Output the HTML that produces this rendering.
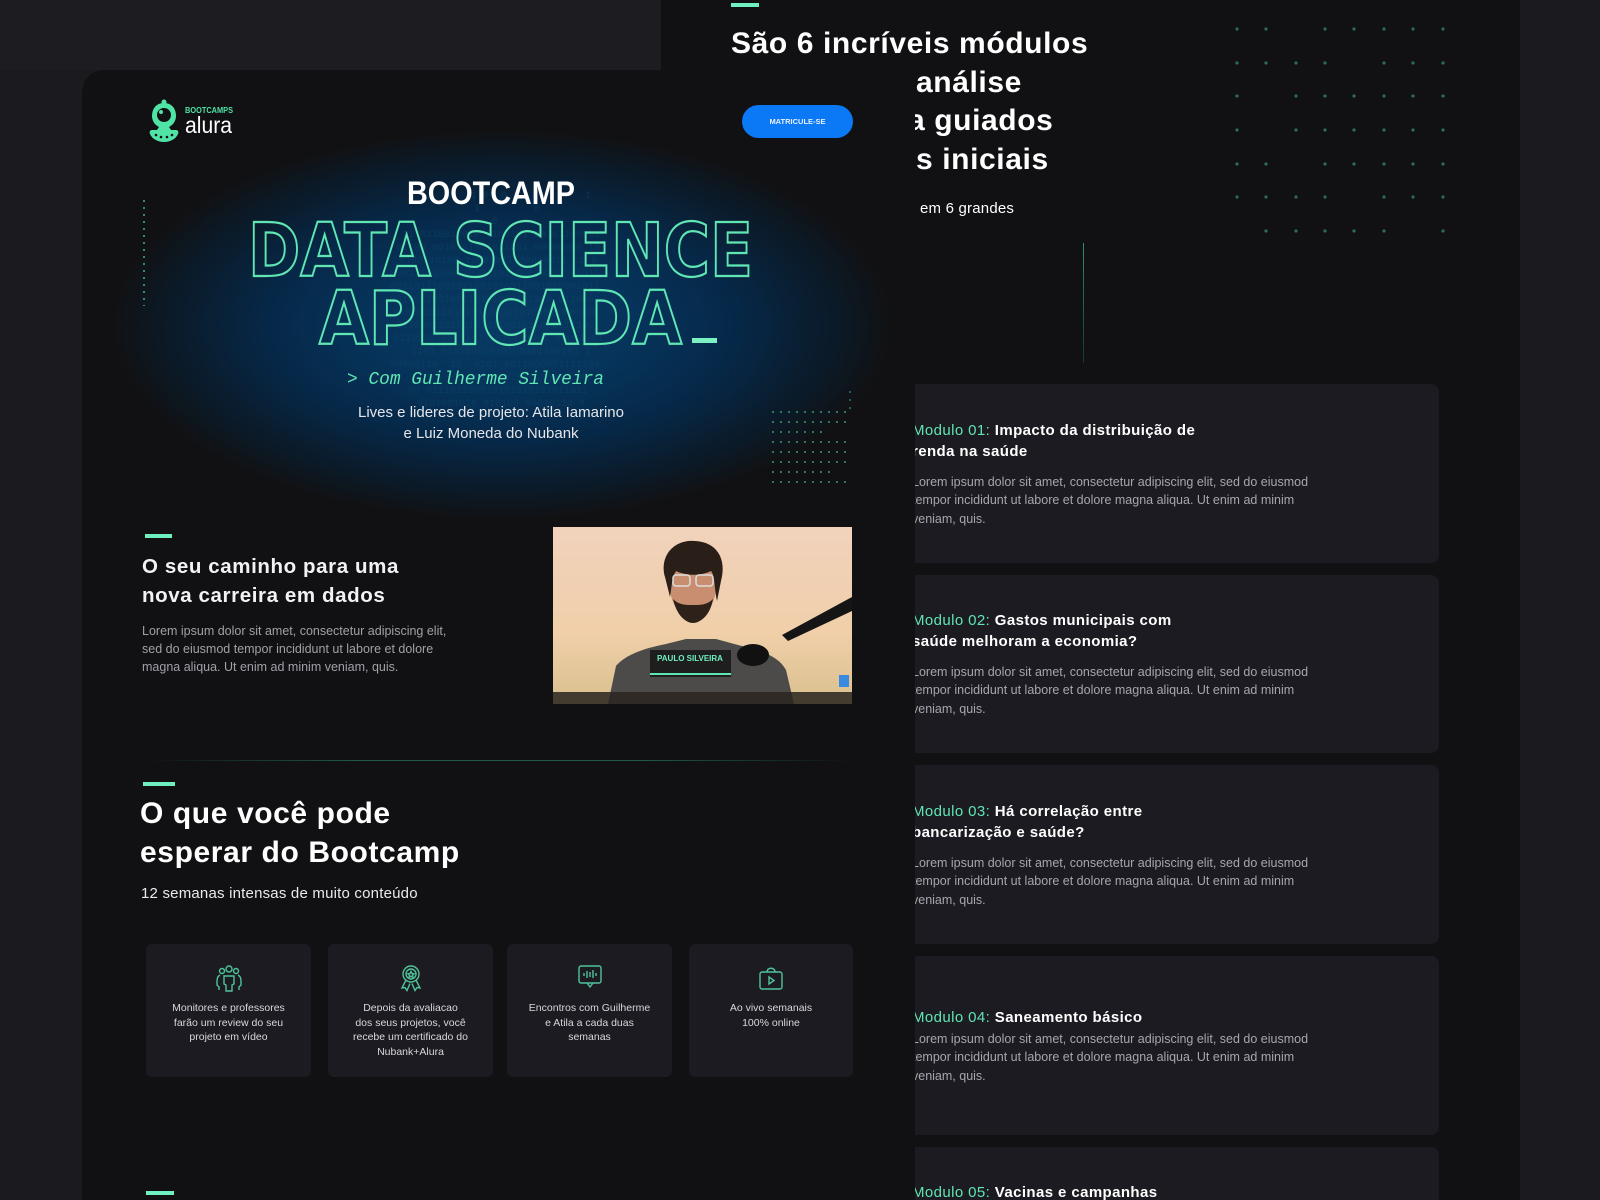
<!DOCTYPE html>
<html><head><meta charset="utf-8">
<style>
*{margin:0;padding:0;box-sizing:border-box}
html,body{width:1600px;height:1200px;overflow:hidden;background:#1b1b1f;font-family:"Liberation Sans",sans-serif;color:#fff}
.abs{position:absolute}
#rp{left:661px;top:0;width:859px;height:1200px;background:#111113}
#tl{left:0;top:0;width:661px;height:70px;background:#1d1d21}
#fp{left:82px;top:70px;width:833px;height:1130px;background:#111113;border-top-left-radius:22px;overflow:hidden;z-index:5}
.bar{position:absolute;height:4px;background:#6ff0c0}
.card{position:absolute;left:880px;width:559px;background:#1c1b21;border-radius:8px;overflow:hidden}
.mt{position:absolute;left:32px;font-size:15px;font-weight:bold;line-height:21px;color:#fff;letter-spacing:.4px}
.mt b{color:#5fe6b3;font-weight:normal}
.mb{position:absolute;left:32px;font-size:12.5px;line-height:18.3px;color:#a6a6ad}
.fc{position:absolute;top:874px;height:133px;background:#1c1b21;border-radius:6px;text-align:center;font-size:10.5px;line-height:14.7px;color:#d8d8dc}
.fc svg{display:block;margin:20px auto 9px}
.h2{font-size:30px;font-weight:bold;line-height:39px;white-space:nowrap;letter-spacing:.6px}
</style></head><body>
<div id="tl" class="abs"></div>
<div id="rp" class="abs"></div>
<div class="bar" style="left:731px;top:3px;width:28px"></div>
<div class="abs h2" style="left:731px;top:24px">São 6 incríveis módulos</div>
<div class="abs h2" style="left:916px;top:63px">análise</div>
<div class="abs h2" style="left:908px;top:101px">a guiados</div>
<div class="abs h2" style="left:916px;top:140px">s iniciais</div>
<div class="abs" style="left:920px;top:200px;font-size:15px;letter-spacing:.2px">em 6 grandes</div>
<div class="abs" style="left:1083px;top:243px;width:1px;height:120px;background:linear-gradient(#2a8f6c,#0f3a2c)"></div>
<svg class="abs" style="left:1230px;top:22px" width="230" height="220">
<g fill="#2f6b56">
<circle cx="7" cy="7" r="1.6"/><circle cx="36" cy="7" r="1.6"/><circle cx="95" cy="7" r="1.6"/><circle cx="124" cy="7" r="1.6"/><circle cx="154" cy="7" r="1.6"/><circle cx="183" cy="7" r="1.6"/><circle cx="213" cy="7" r="1.6"/>
<circle cx="7" cy="41" r="1.6"/><circle cx="36" cy="41" r="1.6"/><circle cx="66" cy="41" r="1.6"/><circle cx="95" cy="41" r="1.6"/><circle cx="154" cy="41" r="1.6"/><circle cx="183" cy="41" r="1.6"/><circle cx="213" cy="41" r="1.6"/>
<circle cx="7" cy="74" r="1.6"/><circle cx="66" cy="74" r="1.6"/><circle cx="95" cy="74" r="1.6"/><circle cx="124" cy="74" r="1.6"/><circle cx="154" cy="74" r="1.6"/><circle cx="183" cy="74" r="1.6"/><circle cx="213" cy="74" r="1.6"/>
<circle cx="7" cy="108" r="1.6"/><circle cx="66" cy="108" r="1.6"/><circle cx="95" cy="108" r="1.6"/><circle cx="124" cy="108" r="1.6"/><circle cx="154" cy="108" r="1.6"/><circle cx="183" cy="108" r="1.6"/><circle cx="213" cy="108" r="1.6"/>
<circle cx="7" cy="142" r="1.6"/><circle cx="36" cy="142" r="1.6"/><circle cx="95" cy="142" r="1.6"/><circle cx="124" cy="142" r="1.6"/><circle cx="154" cy="142" r="1.6"/><circle cx="183" cy="142" r="1.6"/><circle cx="213" cy="142" r="1.6"/>
<circle cx="7" cy="175" r="1.6"/><circle cx="36" cy="175" r="1.6"/><circle cx="66" cy="175" r="1.6"/><circle cx="95" cy="175" r="1.6"/><circle cx="154" cy="175" r="1.6"/><circle cx="183" cy="175" r="1.6"/><circle cx="213" cy="175" r="1.6"/>
<circle cx="36" cy="209" r="1.6"/><circle cx="66" cy="209" r="1.6"/><circle cx="95" cy="209" r="1.6"/><circle cx="124" cy="209" r="1.6"/><circle cx="154" cy="209" r="1.6"/><circle cx="213" cy="209" r="1.6"/>
</g></svg>

<div class="card" style="top:384px;height:179px">
<div class="mt" style="top:36px"><b>Modulo 01:</b> Impacto da distribuição de<br>renda na saúde</div>
<div class="mb" style="top:89px">Lorem ipsum dolor sit amet, consectetur adipiscing elit, sed do eiusmod<br>tempor incididunt ut labore et dolore magna aliqua. Ut enim ad minim<br>veniam, quis.</div></div>
<div class="card" style="top:575px;height:178px">
<div class="mt" style="top:35px"><b>Modulo 02:</b> Gastos municipais com<br>saúde melhoram a economia?</div>
<div class="mb" style="top:88px">Lorem ipsum dolor sit amet, consectetur adipiscing elit, sed do eiusmod<br>tempor incididunt ut labore et dolore magna aliqua. Ut enim ad minim<br>veniam, quis.</div></div>
<div class="card" style="top:765px;height:179px">
<div class="mt" style="top:36px"><b>Modulo 03:</b> Há correlação entre<br>bancarização e saúde?</div>
<div class="mb" style="top:89px">Lorem ipsum dolor sit amet, consectetur adipiscing elit, sed do eiusmod<br>tempor incididunt ut labore et dolore magna aliqua. Ut enim ad minim<br>veniam, quis.</div></div>
<div class="card" style="top:956px;height:179px">
<div class="mt" style="top:51px"><b>Modulo 04:</b> Saneamento básico</div>
<div class="mb" style="top:74px">Lorem ipsum dolor sit amet, consectetur adipiscing elit, sed do eiusmod<br>tempor incididunt ut labore et dolore magna aliqua. Ut enim ad minim<br>veniam, quis.</div></div>
<div class="card" style="top:1147px;height:53px;border-radius:8px 8px 0 0">
<div class="mt" style="top:35px"><b>Modulo 05:</b> Vacinas e campanhas</div></div>

<div id="fp" class="abs">
<div class="abs" style="left:-60px;top:20px;width:960px;height:470px;background:radial-gradient(ellipse 390px 195px at 50% 50%,#073a63 0%,#06335a 35%,#062848 60%,#0b1a28 85%,rgba(17,17,19,0) 100%)"></div>
<div class="abs" style="left:170px;top:120px;width:480px;font-family:'Liberation Mono',monospace;font-size:10px;line-height:13px;color:#0e4a6e;opacity:.45;text-align:center;white-space:pre">      1  0   1 0  0             1
     1         0
 0
   11 0110010010 0100101 00101100001
  01100 0010101001011001 00000000 10
  0100110100 10001011100010011  1 0
 00011101100100001101 00010111  1011
 00110111001011001010011001010001011
 001001100100110101000101010 0110001
 0100110110101011001010100011000101
 011000110100101011001011000111100
0 01100101000110101011111001 00001101
   1101 01011001010100101100101 1
 00000110  10  0101 0011000001111100
     1      0011 001011000010 00
  00 011101100010101010101011011
   0101001010 010100 00010110 0</div>
<svg class="abs" style="left:0;top:0" width="833" height="440">
<text x="409" y="134" text-anchor="middle" font-family="Liberation Sans" font-weight="bold" font-size="32" fill="#fff" textLength="168" lengthAdjust="spacingAndGlyphs">BOOTCAMP</text>
<text x="166" y="206" font-family="DejaVu Sans" font-weight="bold" font-size="74" fill="none" stroke="#5fe6b3" stroke-width="2.2" textLength="505" lengthAdjust="spacingAndGlyphs">DATA SCIENCE</text>
<text x="237" y="274" font-family="DejaVu Sans" font-weight="bold" font-size="74" fill="none" stroke="#5fe6b3" stroke-width="2.2" textLength="363" lengthAdjust="spacingAndGlyphs">APLICADA</text>
<rect x="610" y="268" width="25" height="5" fill="#7df0c4"/>
<text x="265" y="314" font-family="Liberation Mono" font-style="italic" font-size="18" fill="#5fe6b3" textLength="257" lengthAdjust="spacingAndGlyphs">&gt; Com Guilherme Silveira</text>
<text x="409" y="347" text-anchor="middle" font-family="Liberation Sans" font-size="15" fill="#e6e6ea">Lives e lideres de projeto: Atila Iamarino</text>
<text x="409" y="368" text-anchor="middle" font-family="Liberation Sans" font-size="15" fill="#e6e6ea">e Luiz Moneda do Nubank</text>
<line x1="62" y1="130" x2="62" y2="236" stroke="#2e8f6d" stroke-width="2" stroke-dasharray="2 5"/>
<g fill="#2b7a60">
<circle cx="768" cy="322" r="1"/><circle cx="768" cy="330" r="1"/><circle cx="768" cy="338" r="1"/>
</g>
<g stroke="#2b7a60" stroke-width="2" stroke-dasharray="2 6">
<line x1="690" y1="342" x2="770" y2="342"/><line x1="690" y1="352" x2="770" y2="352"/><line x1="690" y1="362" x2="740" y2="362"/><line x1="690" y1="372" x2="770" y2="372"/><line x1="690" y1="382" x2="770" y2="382"/><line x1="690" y1="392" x2="770" y2="392"/><line x1="690" y1="402" x2="754" y2="402"/><line x1="690" y1="412" x2="770" y2="412"/>
</g>
</svg>
<svg class="abs" style="left:66px;top:29px" width="90" height="46">
<g fill="#4fe3a6">
<circle cx="16" cy="3" r="2.5"/>
<path d="M16 4c-8 0-12 6-12 13 0 5 3 9 7 11l-2 3h-5c-2 0-3 2-2 4 2 5 8 8 14 8s12-3 14-8c1-2 0-4-2-4h-5l-2-3c4-2 7-6 7-11 0-7-4-13-12-13z"/>
</g>
<circle cx="16" cy="16" r="7" fill="#111113"/><circle cx="13" cy="13" r="2" fill="#4fe3a6"/>
<g fill="#111113"><circle cx="8" cy="36" r="1.3"/><circle cx="13" cy="38" r="1.3"/><circle cx="19" cy="38" r="1.3"/><circle cx="24" cy="36" r="1.3"/></g>
<text x="37" y="14" font-family="Liberation Sans" font-weight="bold" font-size="8" fill="#4fe3a6" textLength="48" lengthAdjust="spacingAndGlyphs">BOOTCAMPS</text>
<text x="37" y="34" font-family="Liberation Sans" font-size="23" fill="#fff" textLength="47" lengthAdjust="spacingAndGlyphs">alura</text>
</svg>
<div class="abs" style="left:660px;top:35px;width:111px;height:33px;border-radius:17px;background:#0b78f5;font-size:7.5px;font-weight:bold;line-height:33px;text-align:center;color:#e8f0ff">MATRICULE-SE</div>

<div class="bar" style="left:63px;top:464px;width:27px"></div>
<div class="abs" style="left:60px;top:482px;font-size:20.5px;line-height:29px;font-weight:bold;color:#f2f2f4;letter-spacing:.6px">O seu caminho para uma<br>nova carreira em dados</div>
<div class="abs" style="left:60px;top:552px;font-size:12.5px;line-height:18px;color:#a0a0a8">Lorem ipsum dolor sit amet, consectetur adipiscing elit,<br>sed do eiusmod tempor incididunt ut labore et dolore<br>magna aliqua. Ut enim ad minim veniam, quis.</div>
<svg class="abs" style="left:471px;top:457px" width="299" height="177" viewBox="0 0 299 177">
<defs><linearGradient id="bg" x1="0" y1="0" x2="0" y2="1"><stop offset="0" stop-color="#f1d2bc"/><stop offset=".6" stop-color="#f0cfa9"/><stop offset="1" stop-color="#d9c08e"/></linearGradient></defs>
<rect width="299" height="177" fill="url(#bg)"/>
<path d="M55 177l8-38c10-12 30-18 50-22l20-5h30l22 6c20 5 40 10 48 25l8 34z" fill="#4d4b4a"/>
<ellipse cx="140" cy="60" rx="23" ry="30" fill="#c98e70"/>
<path d="M112 50c-6-22 10-38 30-36 22 1 32 18 26 40l-4 20c-3-15-2-25-6-30-8 4-22 6-35 0-4 6-4 14-6 26z" fill="#2a1e18"/>
<path d="M120 72c4 18 14 24 20 24s17-6 20-24c-6 6-12 6-20 6s-14 0-20-6z" fill="#2e2119"/>
<rect x="120" y="48" width="17" height="11" rx="3" fill="none" stroke="#ddd" stroke-width="1.5"/><rect x="143" y="48" width="17" height="11" rx="3" fill="none" stroke="#ddd" stroke-width="1.5"/>
<rect x="97" y="123" width="81" height="27" fill="#1e1e1e"/><rect x="97" y="146" width="81" height="2" fill="#5fe6b3"/>
<text x="137" y="134" text-anchor="middle" font-family="Liberation Sans" font-weight="bold" font-size="8" fill="#6ff0c0">PAULO SILVEIRA</text>
<path d="M299 70l-70 38 6 6 64-30z" fill="#151515"/><ellipse cx="200" cy="128" rx="16" ry="11" fill="#111"/>
<rect x="0" y="165" width="299" height="12" fill="#2a2520" opacity=".85"/>
<rect x="286" y="148" width="10" height="12" fill="#3a8be0"/>
</svg>
<div class="abs" style="left:66px;top:690px;width:704px;height:1px;background:linear-gradient(90deg,#111113,#1f5a45 30%,#1f5a45 70%,#111113)"></div>

<div class="bar" style="left:61px;top:712px;width:32px"></div>
<div class="abs" style="left:58px;top:724px;font-size:30px;line-height:39px;font-weight:bold;letter-spacing:.6px">O que você pode<br>esperar do Bootcamp</div>
<div class="abs" style="left:59px;top:815px;font-size:15px;color:#eaeaee;letter-spacing:.2px">12 semanas intensas de muito conteúdo</div>

<div class="fc" style="left:64px;width:165px">
<svg width="28" height="28" viewBox="0 0 28 28" fill="none" stroke="#4fc39a" stroke-width="1.4"><circle cx="14" cy="5" r="3"/><circle cx="7" cy="7" r="2.5"/><circle cx="21" cy="7" r="2.5"/><path d="M9 12h10v8l-2 1v6h-6v-6l-2-1z"/><path d="M5 11c-2 1-3 3-3 6v4l2 2v3M23 11c2 1 3 3 3 6v4l-2 2v3"/></svg>
Monitores e professores<br>farão um review do seu<br>projeto em vídeo</div>
<div class="fc" style="left:246px;width:165px">
<svg width="28" height="28" viewBox="0 0 28 28" fill="none" stroke="#4fc39a" stroke-width="1.4"><circle cx="14" cy="10" r="8"/><circle cx="14" cy="10" r="5"/><path d="M14 7.5l1 2 2 .3-1.5 1.4.4 2.1L14 12.3l-1.9 1 .4-2.1L11 9.8l2-.3z"/><path d="M9 16l-4 8 3-.5 2 3 3-7M19 16l4 8-3-.5-2 3-3-7"/></svg>
Depois da avaliacao<br>dos seus projetos, você<br>recebe um certificado do<br>Nubank+Alura</div>
<div class="fc" style="left:425px;width:165px">
<svg width="28" height="28" viewBox="0 0 28 28" fill="none" stroke="#4fc39a" stroke-width="1.4"><rect x="3" y="2" width="22" height="17" rx="2"/><path d="M11 19l3 4 3-4"/><path d="M8 9v3M11 7v7M14 8v5M17 6v8M20 9v3"/></svg>
Encontros com Guilherme<br>e Atila a cada duas<br>semanas</div>
<div class="fc" style="left:607px;width:164px">
<svg width="28" height="28" viewBox="0 0 28 28" fill="none" stroke="#4fc39a" stroke-width="1.4"><rect x="3" y="8" width="22" height="17" rx="2"/><path d="M10 8c0-5 8-5 8 0"/><path d="M12 13v7l5-3.5z"/></svg>
Ao vivo semanais<br>100% online</div>

<div class="bar" style="left:64px;top:1121px;width:28px"></div>
</div>
</body></html>
